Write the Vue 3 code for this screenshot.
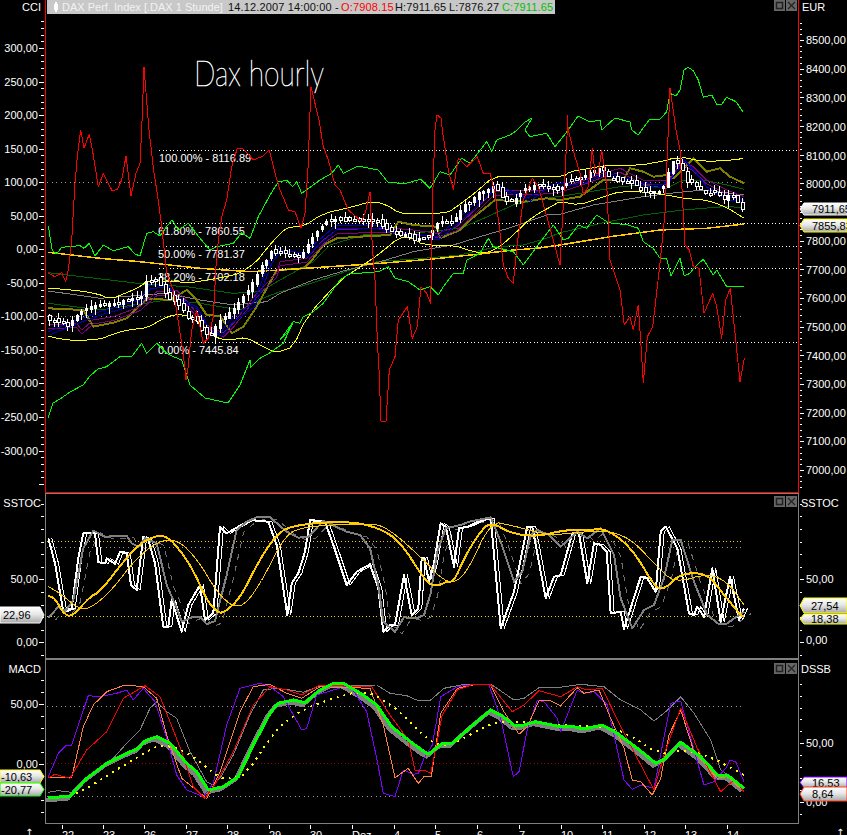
<script setup>
const Z = (ox, oy, s) =>
  s.trim().split(/\s+/).map((p) => {
    const [a, b] = p.split(',').map(Number)
    return [ox + a / 3, oy + b / 3]
  })
const A = (s) => Z(0, 0, s).map(([x, y]) => [x * 3, y * 3])
const z2 = (s) => Z(600, 0, s)
const z3 = (s) => Z(0, 130, s)
const z4 = (s) => Z(280, 130, s)
const z5 = (s) => Z(560, 130, s)
const z6 = (s) => Z(0, 485, s)
const z7 = (s) => Z(424, 485, s)
const z8 = (s) => Z(0, 655, s)
const z9 = (s) => Z(424, 655, s)
const str = (pts) => pts.map(([x, y]) => `${x.toFixed(1)},${y.toFixed(1)}`).join(' ')
const shift = (pts, dx, dy) => pts.map(([x, y]) => [x + dx, y + dy])
const smooth = (pts, n = 2) => {
  let cur = pts
  for (let k = 0; k < n; k++) {
    const out = [cur[0]]
    for (let i = 0; i < cur.length - 1; i++) {
      const [x0, y0] = cur[i]
      const [x1, y1] = cur[i + 1]
      out.push([x0 * 0.75 + x1 * 0.25, y0 * 0.75 + y1 * 0.25])
      out.push([x0 * 0.25 + x1 * 0.75, y0 * 0.25 + y1 * 0.75])
    }
    out.push(cur[cur.length - 1])
    cur = out
  }
  return cur
}

// ---- main panel series
const red = [
  ...z3('145,430 165,440 185,428 197,455 205,420 215,330 225,160 232,80 242,0 252,55 268,12 280,75 295,170 310,130 322,155 337,183 352,178 365,150 378,78 393,197 408,130 420,100 425,0'),
  ...A('144,67 149,130'),
  ...z3('462,130 472,190 485,290 500,430 520,480 545,640 555,715'),
  ...A('186,380 188,368'),
  ...z3('575,600 590,540 610,640 625,625 640,560 650,370 665,260 680,210 695,110 712,55 730,57 760,90 790,78 808,60 825,130'),
  ...z4('0,180 15,215 25,240 45,245 63,295 75,250 85,100 88,0'),
  ...A('311,87 319,120'),
  ...z4('130,50 145,90 165,165 180,180 205,240 245,275 258,240 270,185 277,350 285,450 292,630 297,720'),
  ...A('381,421 386,421'),
  ...z4('328,720 345,680 355,570 382,530 397,625 412,590 423,470 440,490 452,520 458,200 465,0'),
  ...A('437,115 441,118'),
  ...z4('487,0 505,120 520,178 535,85 560,110 592,80 610,130 630,130 645,190 660,310 670,405 685,445 700,460 712,340 730,210 757,145 775,170 795,240 840,405 855,130 862,0'),
  ...A('567,115'),
  ...z5('25,0 45,80 60,130 70,195 85,170 97,55 105,130 115,130 125,60 140,160 150,390 180,480 193,585 210,560 220,600 235,525 245,680 250,758 262,620 278,590 300,400 315,250 325,0'),
  ...A('670,88'),
  ...z5('348,0 360,60 370,250 375,345 388,360 400,410 417,415 432,550 458,490 470,530 485,625 497,510 511,475 525,610 540,755 553,685')
]
const greenHi = [
  ...z3('145,288 157,362 170,372 185,352 240,347 252,355 268,340 285,378 310,345 340,362 385,350 405,372 420,378 440,310 460,305 480,318 500,290 516,270 535,300 565,280 600,325 630,360 650,350 700,340 725,308 750,325 775,260 810,195 835,155'),
  ...z4('0,155 20,150 38,170 50,155 65,190 120,150 155,130 175,105 190,130 235,108 295,120 325,158 378,160 422,148 450,175 480,125 510,135 545,85 570,100 585,80 620,35 635,65 650,30 690,15 712,0'),
  ...A('525,122 532,118'),
  ...z4('735,0 750,20 800,10 825,50 865,0'),
  ...A('578,116 590,122 600,120'),
  ...z5('125,0'),
  ...A('615,118 630,122'),
  ...z5('215,0 235,15 245,0'),
  ...A('650,119'),
  ...z2('180,358 200,335 210,280 228,288 240,270 252,210 265,202 280,212 295,240 310,292 335,285 350,313 365,313 380,292 408,305 430,337')
]
const greenLo = [
  ...A('48,418 53,403 60,399 70,392 83,385 90,376 98,369'),
  ...z3('320,710 360,680 395,680 425,640 440,670 470,640 500,670 520,680 545,690 555,720'),
  ...A('190,385 205,398 228,403 240,385 250,360'),
  ...z3('750,715 780,685 810,668 850,640 880,575'),
  ...z4('0,630 20,610 40,575 60,580 70,560 100,545 130,520 180,450 210,430 235,430 295,425 325,410 345,445 385,455 420,480 450,470 475,495 490,470 520,430 550,430 560,390 600,370 625,325 640,350 700,365 730,405 770,350 820,285 850,330'),
  ...z5('0,305 10,330 25,325 55,285 80,295 110,255 145,278 205,285 235,295 250,335 280,355 300,385 320,385 333,438 360,385 373,438 390,430 405,410 430,388 460,435 470,420 500,470 553,470')
]
const yellowHi = smooth([
  ...z3('145,475 200,478 290,490 330,508 380,488 420,470 445,450 520,455 575,458 620,450 680,440 720,430 770,395 800,355 850,300'),
  ...z4('35,290 70,290 130,250 200,235 280,213 320,225 360,250 400,250 500,250 530,230 590,185 640,140 700,140 760,140 850,140'),
  ...z5('30,125 90,115 130,107 200,108 280,100 360,80 430,95 520,90 550,85')
], 1)
const yellowLo = smooth([
  ...z3('145,618 170,625 225,632 300,628 340,612 390,598 440,595 490,565 530,552 570,560 610,590 650,625 690,630 740,622 780,645 820,665'),
  ...z4('0,665 40,650 80,560 180,450 250,405 300,370 360,320 400,325 430,345 520,345 580,365 620,370 660,350 705,310 750,265 830,220'),
  ...z5('0,215 60,225 130,200 180,185 250,185 320,195 370,205 440,210 500,232 553,265')
], 1)
const gold = [
  ...z3('145,367 300,385 420,395 600,415 750,425'),
  ...z4('0,420 150,410 300,400 450,388 600,372 700,360 770,355'),
  ...z5('0,345 150,320 300,300 440,295 553,282')
]
const green1 = [
  ...z3('145,428 430,462 560,470 700,490 780,485'),
  ...z4('0,450 100,395 150,345 250,315 400,310 540,295 600,270 700,225 800,205'),
  ...z5('60,190 180,170 250,165 320,175 370,150 430,150 500,165 553,178')
]
const green2 = [
  ...z3('145,520 300,540 500,510 600,520 720,540 800,500'),
  ...z4('0,485 60,470 140,445 210,420 290,395 430,385 540,375 650,350 730,345 800,325'),
  ...z5('0,308 60,295 130,278 250,255 370,240 490,230 553,232')
]
const gray = [
  ...z3('145,483 300,505 500,490 600,510 700,525 800,515'),
  ...z4('0,490 100,450 200,420 300,395 400,365 520,345 600,320 700,290 800,255'),
  ...z5('0,253 100,225 250,200 330,190 430,180 553,195')
]
const olive = [
  ...z3('145,535 250,540 280,590 340,578 380,565 440,505 510,510 560,480 590,510 620,555 660,558 695,610 730,590 770,530 830,420'),
  ...z4('0,420 70,415 100,385 130,345 170,325 240,320 330,315 355,275 400,285 470,290 480,325 540,300 570,270 620,230 645,210 730,215 800,205'),
  ...z5('0,210 60,200 130,150 190,150 210,115 250,125 280,140 320,135 340,145 400,85 440,125 480,115 510,140 553,160')
]
const purple = [
  ...z3('145,585 230,580 245,600 280,570 340,560 420,530 470,485 530,480 570,525 620,585 670,610 700,580 770,490 830,430'),
  ...z4('0,395 80,385 130,330 170,300 280,295 340,295 400,300 470,310 530,290 590,235 640,185 700,180 790,180'),
  ...z5('0,175 60,155 130,130 180,115 250,150 320,150 360,90 400,110 440,150 500,180 553,200')
]
const navy = [
  ...z3('145,605 230,570 300,545 420,510 445,468 500,460 530,500 590,530 625,595 660,610 690,570 760,520 810,390 840,350'),
  ...z4('0,360 80,370 100,345 170,285 280,285 340,300 400,315 470,320 530,270 590,215 645,165 700,185 745,205 790,170'),
  ...z5('0,160 70,150 125,125 180,140 250,160 310,165 340,120 370,85 410,130 440,170 500,200 553,210')
]

// candles follow the price path
const price = [
  ...z3('150,570 185,578 200,590 240,548 268,530 310,525 340,522 380,510 425,500 435,455 448,455 470,450 490,485 505,505 530,520 545,530 560,565 585,565 610,610 628,620 655,575 670,565 697,540 712,525 725,505 740,490 752,465 765,450 780,410 795,400 810,365 830,370'),
  ...z4('10,370 38,378 64,378 92,330 106,310 120,298 135,280 148,270 162,272 175,268 190,270 205,272 218,270 245,272 270,270 290,275 310,295 335,305 355,318 380,315 400,330 425,325 450,322 465,285 485,275 505,278 520,275 535,250 550,228 578,212 590,190 605,185 620,185 632,170 645,170 660,195 675,215 700,215 730,180 745,175 758,168 775,165 800,170'),
  ...z5('0,180 30,150 60,145 95,125 125,115 145,140 165,150 195,155 220,160 250,185 275,188 305,185 320,150 330,100 345,95 360,100 375,155 400,160 430,185 445,195 470,180 485,210 510,195 525,200 540,230 553,245')
]
const priceAt = (x) => {
  for (let i = 1; i < price.length; i++) {
    if (x <= price[i][0]) {
      const [x0, y0] = price[i - 1]
      const [x1, y1] = price[i]
      return y0 + ((y1 - y0) * (x - x0)) / Math.max(x1 - x0, 0.01)
    }
  }
  return price[price.length - 1][1]
}
const rnd = (n) => {
  const v = Math.sin(n * 12.9898) * 43758.5453
  return v - Math.floor(v)
}
const candles = []
for (let i = 0, x = 49; x < 745; i++, x += 4.62) {
  const c = priceAt(x)
  const o = priceAt(x - 4.62) + (rnd(i) - 0.5) * 5
  const top = Math.round(Math.min(o, c) - 1)
  const h = Math.max(Math.round(Math.abs(o - c)) + 1, 2)
  const w1 = Math.round(rnd(i + 300) * 6)
  const w2 = Math.round(rnd(i + 700) * 7)
  candles.push({
    x: Math.round(x),
    top,
    h,
    wt: top - w1,
    wb: top + h + w2,
    up: c <= o && h > 2
  })
}

const mainLines = [
  { c: 'l-g1', p: green1 },
  { c: 'l-g1', p: green2 },
  { c: 'l-gray', p: gray },
  { c: 'l-olive', p: olive },
  { c: 'l-yellow', p: yellowHi },
  { c: 'l-yellow', p: yellowLo },
  { c: 'l-gold', p: gold },
  { c: 'l-purple', p: purple },
  { c: 'l-purple', p: shift(purple, 0, 4) },
  { c: 'l-navy', p: navy },
  { c: 'l-navy', p: shift(navy, 2, 3) }
].map((l) => ({ c: l.c, p: str(l.p) }))
const topLines = [
  { c: 'l-green', p: greenHi },
  { c: 'l-green', p: greenLo },
  { c: 'l-red', p: red }
].map((l) => ({ c: l.c, p: str(l.p) }))

// ---- SSTOC
const wThick = [
  ...z6('145,160 165,235 190,380 215,370 235,220 250,145 285,145 295,232 315,235 320,220 345,237 360,200 380,205 393,300 410,315 430,155 445,165 465,235 490,425 505,425 515,345 545,440 565,360 600,300 615,405 640,385 660,125 680,145 715,125 750,105 805,110 830,180 862,390 875,295 895,265 915,200 930,105 975,110 1000,180 1040,300 1070,260 1110,238 1135,310 1150,440 1170,420 1185,420 1212,270 1235,390 1255,370 1265,220'),
  ...z7('0,218 15,290 30,235 50,115 65,125 90,245 105,130 130,125 175,105 200,100 230,430 270,320 310,125 325,125 365,340 390,275 410,270 445,145 465,145 490,295 510,175 530,180 548,200 560,385 590,380 600,432 650,275 670,280 695,320 710,140 725,125 760,190 795,385 810,390 820,365 840,395 865,250 890,410 918,275 945,405 960,370')
]
const gThick = [
  ...z6('145,400 175,365 195,380 220,345 250,190 280,137 315,155 380,152 395,175 415,185 435,160 470,175 500,300 530,370 545,410 580,395 600,395 620,418 645,408 680,270 710,135 740,110 770,97 810,97 860,140 895,158 925,155 970,108 1040,140 1080,150 1110,190 1135,300 1150,410 1185,440 1212,397 1250,400'),
  ...z7('0,390 20,325 40,200 65,130 110,120 135,110 200,97 230,170 270,290 295,260 320,150 340,135 375,150 410,185 460,140 490,160 530,130 570,210 590,340 625,430 660,375 690,360 720,280 745,165 770,165 810,290 850,390 885,418 905,418 960,380')
]
const yThick = smooth([
  ...z6('145,333 165,340 190,385 215,397 270,335 300,320 370,230 420,175 470,152 490,152 520,170 575,245 620,345 650,380 670,385 720,340 770,240 820,160 870,120 1050,108 1140,130 1200,170'),
  ...z7('0,280 20,300 50,300 65,290 90,290 120,220 165,145 200,110 260,145 340,155 420,135 500,135 535,130 590,160 640,215 695,310 725,310 770,265 850,265 900,330 950,390 960,395')
], 2)
const yThin = smooth([
  ...z6('145,305 180,325 240,375 280,365 340,310 400,230 470,170 530,162 590,220 650,320 700,368 740,355 790,280 850,160 900,125 1100,115 1160,125'),
  ...z7('0,225 50,280 90,295 130,260 200,110 260,120 370,150 440,145 540,135 620,160 690,235 750,295 850,265 910,290 960,360')
], 2)
const stocLines = [
  { c: 'l-dash', p: shift(gThick, 7, 2) },
  { c: 'l-wthin', p: shift(wThick, 3.5, 0) },
  { c: 'l-wthick', p: wThick },
  { c: 'l-gthick', p: gThick },
  { c: 'l-ythin', p: yThin },
  { c: 'l-ythick', p: yThick }
].map((l) => ({ c: l.c, p: str(l.p) }))

// ---- MACD / DSSB
const mGray = [
  ...z8('145,412 175,407 215,412 260,370 340,310 380,265 420,225 450,160 470,140 500,170 530,190 570,290 620,380 640,390 660,370 700,300 750,180 790,105 830,100 870,105 910,112 960,92 1130,90 1170,115 1220,122 1250,135'),
  ...z9('0,137 20,135 60,100 110,90 200,87 270,135 300,130 345,98 400,98 470,88 540,95 590,135 650,165 690,198 725,170 770,125 810,175 860,255 890,345 920,365 960,400')
]
const mPurple = [
  ...z8('145,365 175,295 200,270 215,270 265,122 300,125 350,115 380,105 400,135 430,100 465,140 500,250 530,360 560,405 610,425 640,385 680,210 720,100 780,85 810,95 850,125 905,225 920,220 950,120 1050,90 1100,170 1130,310 1150,415 1185,425 1210,345 1240,358 1255,355'),
  ...z9('0,310 25,270 50,125 100,95 160,87 195,90 230,190 268,365 285,350 310,225 340,135 360,140 400,190 410,230 460,105 480,115 510,110 550,150 600,375 625,403 650,390 690,400 740,145 770,138 800,250 840,390 870,380 905,340 918,315 935,320 960,380')
]
const mOrange = [
  ...z8('145,368 215,368 250,215 280,150 320,110 375,90 430,95 470,130 500,240 545,370 620,430 660,350 720,170 760,95 810,88 860,115 905,130 960,95 1110,100 1150,210 1185,368 1225,340 1255,385'),
  ...z9('0,365 22,365 50,175 100,100 160,87 200,90 240,170 285,238 310,215 345,137 380,137 410,152 460,98 480,115 525,105 560,190 600,280 625,375 650,380 685,420 710,370 735,240 770,165 810,290 880,370 910,365 960,410')
]
const mRed = [
  ...z8('145,368 165,358 210,370 260,285 320,230 370,130 435,92 480,125 510,200 545,290 580,395 615,430 650,380 700,290 760,150 810,95 860,105 905,120 960,90 1115,95 1170,180 1225,255 1245,345'),
  ...z9('0,345 20,355 55,180 100,105 150,87 200,90 265,170 300,150 345,107 410,125 460,95 490,105 535,100 590,215 640,310 690,405 720,300 770,160 820,280 890,410 930,375 960,410')
]
const mGreen = [
  ...z8('145,428 210,424 260,370 320,325 380,295 415,280 435,258 470,245 510,265 560,325 590,350 625,405 670,395 715,365 760,270 810,175 835,145 880,135 915,143 960,105 1000,85 1030,85 1090,120 1130,150 1175,215 1225,255'),
  ...z9('0,290 15,297 55,265 85,265 140,215 200,165 230,180 270,210 300,210 335,200 410,215 440,213 480,222 535,210 580,235 640,280 695,325 725,310 770,262 830,305 880,360 910,360 960,400')
]
const mDots = smooth([
  ...z8('145,428 230,420 340,350 440,290 480,270 540,280 600,320 660,370 700,370 740,355 820,235 880,180 960,142 1090,105 1150,135 1200,170'),
  ...z9('0,245 50,275 100,260 210,200 270,200 340,205 430,212 530,212 610,235 710,300 770,285 850,300 960,360')
], 1)
const macdLines = [
  { c: 'l-mband', p: shift(mGreen, -2.5, 2.5) },
  { c: 'l-mgray', p: mGray },
  { c: 'l-mpurple', p: mPurple },
  { c: 'l-morange', p: mOrange },
  { c: 'l-red', p: mRed },
  { c: 'l-mdots', p: mDots },
  { c: 'l-mgreen', p: mGreen }
].map((l) => ({ c: l.c, p: str(l.p) }))

// ---- axes
const axis = (from, to, step, skip, len, x, dir) => {
  const out = []
  for (let y = from, i = 0; y <= to; y += step, i++) {
    const major = skip(i)
    out.push({ x1: x, x2: x + dir * (major ? len : len - 2), y: Math.round(y) + 0.5 })
  }
  return out
}
const ticks = [
  ...axis(48 - 6.71 * 4, 485, 6.71, (i) => i % 5 === 4, 5, 44, -1),
  ...axis(40 - 5.733 * 3, 488, 5.733, (i) => i % 5 === 3, 4, 800, 1),
  ...axis(642.3 - 12.6 * 11, 656, 12.6, (i) => i === 6 || i === 11, 5, 44, -1),
  ...axis(642.3 - 12.6 * 11, 656, 12.6, (i) => i === 6 || i === 11, 4, 800, 1),
  ...axis(703.7 - 12 * 2, 812, 12, (i) => i === 2 || i === 7, 5, 44, -1),
  ...axis(743 - 11.8 * 5, 815, 11.8, (i) => i === 5 || i === 10, 4, 800, 1)
]
const leftLabels = [
  ['300,00', 48], ['250,00', 82], ['200,00', 115], ['150,00', 149], ['100,00', 182], ['50,00', 216],
  ['0,00', 249], ['-50,00', 283], ['-100,00', 316], ['-150,00', 350], ['-200,00', 383], ['-250,00', 417],
  ['-300,00', 451], ['50,00', 579], ['0,00', 642], ['50,00', 704], ['0,00', 764]
]
const rightLabels = [
  ['8500,00', 40], ['8400,00', 69], ['8300,00', 98], ['8200,00', 127], ['8100,00', 156], ['8000,00', 184],
  ['7800,00', 241], ['7700,00', 270], ['7600,00', 298], ['7500,00', 327], ['7400,00', 356], ['7300,00', 384],
  ['7200,00', 413], ['7100,00', 441], ['7000,00', 470], ['50,00', 579], ['0,00', 640], ['50,00', 743], ['0,00', 802]
]
const fibs = [
  ['100.00% - 8116.89', 159, 162, 150.5],
  ['61.80% - 7860.55', 158, 235, 223.5],
  ['50.00% - 7781.37', 158, 258, 246.5],
  ['38.20% - 7702.18', 158, 281, 268.5],
  ['0.00% - 7445.84', 158, 354, 342.5]
]
const days = [
  ['22', 62], ['23', 103], ['26', 144], ['27', 186], ['28', 227], ['29', 269], ['30', 310], ['Dez', 352],
  ['4', 394], ['5', 435], ['6', 477], ['7', 519], ['10', 561], ['11', 602], ['12', 644], ['13', 685], ['14', 727]
]
const tagR = (y, h) => `847,${y} 804,${y} 800,${y + h / 2} 804,${y + h} 847,${y + h}`
const tagL = (y, h) => `0,${y} 40,${y} 44,${y + h / 2} 40,${y + h} 0,${y + h}`
const tags = [
  { pts: tagR(203, 12), c: 't-white', t: '7911,65', x: 812, y: 213 },
  { pts: tagR(219, 13), c: 't-yellow', t: '7855,83', x: 812, y: 230 },
  { pts: tagR(598, 15), c: 't-yellow', t: '27,54', x: 811, y: 610 },
  { pts: tagR(614, 10), c: 't-yellow', t: '18,38', x: 811, y: 623 },
  { pts: tagR(777, 11), c: 't-purple', t: '16,53', x: 812, y: 787 },
  { pts: tagR(787, 14), c: 't-orange', t: '8,64', x: 812, y: 798 },
  { pts: tagL(607, 16), c: 't-white', t: '22,96', x: 3, y: 619 },
  { pts: tagL(770, 13), c: 't-yellow', t: '-10,63', x: 1, y: 781 },
  { pts: tagL(783, 13), c: 't-green', t: '-20,77', x: 1, y: 794 }
]
const buttonRows = [0, 496, 663]
</script>

<template>
  <div class="screen">
    <svg class="chart" viewBox="0 0 847 835" width="847" height="835" xmlns="http://www.w3.org/2000/svg">
      <defs>
        <linearGradient id="tagFill" x1="0" y1="0" x2="0" y2="1">
          <stop offset="0" stop-color="#ffffff" />
          <stop offset="0.45" stop-color="#e8e8e8" />
          <stop offset="1" stop-color="#a8a8a8" />
        </linearGradient>
      </defs>

      <!-- header -->
      <rect class="head" x="47" y="0" width="508" height="14" />
      <rect class="head-w" x="54" y="4" width="4" height="6" />
      <rect class="head-w" x="55" y="2" width="2" height="10" />
      <text class="txt h-light" x="62" y="11">DAX Perf. Index [.DAX 1 Stunde]</text>
      <text class="txt hdr" y="11">
        <tspan class="h-dark" x="228">14.12.2007 14:00:00 -</tspan>
        <tspan class="h-red" x="341">O:7908.15</tspan>
        <tspan class="h-dark" x="395">H:7911.65</tspan>
        <tspan class="h-dark" x="449">L:7876.27</tspan>
        <tspan class="h-green" x="502">C:7911.65</tspan>
      </text>

      <!-- window buttons -->
      <g v-for="by in buttonRows" :key="by" :transform="`translate(774 ${by})`">
        <rect class="btn" x="0" y="0" width="11" height="11" />
        <rect class="btn-i" x="2.5" y="2.5" width="6" height="6" />
        <rect class="btn" x="12" y="0" width="11" height="11" />
        <path class="btn-x" d="M14 2 L21 9 M21 2 L14 9" />
      </g>

      <!-- fib labels + dotted levels -->
      <text v-for="f in fibs" :key="f[0]" class="txt t-w" :x="f[1]" :y="f[2]">{{ f[0] }}</text>
      <line v-for="f in fibs" :key="'l' + f[0]" class="dot-w" x1="159" x2="798" :y1="f[3]" :y2="f[3]" />
      <line class="dot-g" x1="47" x2="745" y1="182.5" y2="182.5" />
      <line class="dot-g" x1="47" x2="745" y1="316.5" y2="316.5" />

      <text class="title" x="194" y="86" textLength="130" lengthAdjust="spacingAndGlyphs">Dax hourly</text>

      <polyline v-for="(l, i) in mainLines" :key="'m' + i" :class="l.c" :points="l.p" />
      <g v-for="(k, i) in candles" :key="'c' + i">
        <line class="wick" :x1="k.x + 0.5" :x2="k.x + 0.5" :y1="k.wt" :y2="k.wb" />
        <rect :class="k.up ? 'body' : 'body-d'" :x="k.x - 1" :y="k.top" width="3" :height="k.h" />
      </g>
      <polyline v-for="(l, i) in topLines" :key="'t' + i" :class="l.c" :points="l.p" />

      <!-- panel frames -->
      <line class="fr-red" x1="45.5" x2="45.5" y1="0" y2="492" />
      <line class="fr-red" x1="798.5" x2="798.5" y1="0" y2="492" />
      <line class="fr-red" x1="45" x2="799" y1="492.5" y2="492.5" />
      <line class="fr-gray" x1="45" x2="799" y1="493.5" y2="493.5" />
      <line class="fr-gray" x1="45.5" x2="45.5" y1="493" y2="824" />
      <line class="fr-gray" x1="798.5" x2="798.5" y1="493" y2="824" />
      <line class="fr-gray2" x1="45" x2="799" y1="659" y2="659" />
      <line class="fr-gray" x1="45" x2="799" y1="823.5" y2="823.5" />

      <!-- SSTOC -->
      <line class="dot-y" x1="47" x2="742" y1="541.5" y2="541.5" />
      <line class="dot-g" x1="47" x2="742" y1="547.5" y2="547.5" />
      <line class="dot-y" x1="47" x2="742" y1="616.5" y2="616.5" />
      <polyline v-for="(l, i) in stocLines" :key="'s' + i" :class="l.c" :points="l.p" />

      <!-- MACD -->
      <line class="dot-g" x1="47" x2="741" y1="706.5" y2="706.5" />
      <line class="dot-r" x1="47" x2="741" y1="763.5" y2="763.5" />
      <line class="dot-g" x1="47" x2="741" y1="796.5" y2="796.5" />
      <polyline v-for="(l, i) in macdLines" :key="'d' + i" :class="l.c" :points="l.p" />

      <!-- ticks and labels -->
      <line v-for="(t, i) in ticks" :key="'k' + i" class="tick" :x1="t.x1" :x2="t.x2" :y1="t.y" :y2="t.y" />
      <text v-for="(t, i) in leftLabels" :key="'ll' + i" class="txt t-w" x="38" :y="t[1] + 4" text-anchor="end">{{ t[0] }}</text>
      <text v-for="(t, i) in rightLabels" :key="'rl' + i" class="txt t-w" x="806" :y="t[1] + 4">{{ t[0] }}</text>
      <text class="txt t-w" x="41" y="11" text-anchor="end">CCI</text>
      <text class="txt t-w" x="802" y="11">EUR</text>
      <text class="txt t-w" x="41" y="507" text-anchor="end">SSTOC</text>
      <text class="txt t-w" x="801" y="507">SSTOC</text>
      <text class="txt t-w" x="41" y="673" text-anchor="end">MACD</text>
      <text class="txt t-w" x="801" y="673">DSSB</text>

      <!-- value tags -->
      <g v-for="t in tags" :key="t.t">
        <polygon :class="t.c" fill="url(#tagFill)" :points="t.pts" />
        <text class="txt t-k" :x="t.x" :y="t.y">{{ t.t }}</text>
      </g>

      <!-- time axis -->
      <g v-for="d in days" :key="d[0]">
        <line class="tick" :x1="d[1] + 0.5" :x2="d[1] + 0.5" y1="825" y2="829" />
        <text class="txt t-w" :x="d[1] + 0" y="839">{{ d[0] }}</text>
      </g>
      <text class="arrow" x="25" y="836">↑</text>
      <text class="arrow" x="836" y="836">↑</text>
    </svg>
  </div>
</template>

<style scoped>
.screen {
  width: 847px;
  height: 835px;
  background: #000;
  overflow: hidden;
}
.chart {
  display: block;
}
polyline {
  fill: none;
  shape-rendering: crispEdges;
  stroke-linejoin: round;
}
line {
  shape-rendering: crispEdges;
}
.txt {
  font-family: "Liberation Sans", Arial, sans-serif;
  font-size: 11px;
}
.hdr { letter-spacing: 0.15px; }
.t-w { fill: #fff; }
.t-k { fill: #000; }
.title {
  font-family: Lato, Roboto, "Liberation Sans", sans-serif;
  font-weight: 100;
  font-size: 36px;
  fill: #fff;
  stroke: #fff;
  stroke-width: 0.6px;
}
.arrow {
  font-family: "DejaVu Sans", sans-serif;
  font-size: 10px;
  fill: #fff;
}
.head { fill: #c8c8c8; }
.head-w { fill: #fff; }
.h-light { fill: #f2f2f2; }
.h-dark { fill: #111; }
.h-red { fill: #f00; }
.h-green { fill: #00c000; }
.btn { fill: #666; }
.btn-i { fill: none; stroke: #222; stroke-width: 1.5; }
.btn-x { stroke: #222; stroke-width: 1.2; fill: none; }
.dot-w { stroke: #fff; stroke-dasharray: 1 2.5; }
.dot-g { stroke: #9a9a9a; stroke-dasharray: 1 3.5; }
.dot-y { stroke: #ffcc00; stroke-dasharray: 1 2.5; }
.dot-r { stroke: #a00000; stroke-dasharray: 1 2.5; }
.wick { stroke: #fff; }
.body { fill: #fff; }
.body-d { fill: #000; stroke: #fff; stroke-width: 1; shape-rendering: crispEdges; }
.tick { stroke: #fff; }
.fr-red { stroke: #f00; stroke-width: 1; }
.fr-gray { stroke: #808080; stroke-width: 1; }
.fr-gray2 { stroke: #808080; stroke-width: 2; }
.l-red { stroke: #f00; stroke-width: 1; }
.l-green { stroke: #00ff00; stroke-width: 1; }
.l-g1 { stroke: #006400; stroke-width: 1; }
.l-gray { stroke: #808080; stroke-width: 1; }
.l-yellow { stroke: #ffff00; stroke-width: 1; }
.l-gold { stroke: #ffcc00; stroke-width: 1.5; }
.l-olive { stroke: #808000; stroke-width: 2; }
.l-purple { stroke: #800080; stroke-width: 1; }
.l-navy { stroke: #0000c0; stroke-width: 1; }
.l-wthick { stroke: #fff; stroke-width: 2; }
.l-wthin { stroke: #fff; stroke-width: 1; }
.l-gthick { stroke: #808080; stroke-width: 2; }
.l-dash { stroke: #707070; stroke-width: 1; stroke-dasharray: 6 6; }
.l-ythick { stroke: #ffcc00; stroke-width: 2; }
.l-ythin { stroke: #ffcc00; stroke-width: 1; }
.l-mband { stroke: #808080; stroke-width: 4; }
.l-mgray { stroke: #808080; stroke-width: 1; }
.l-mpurple { stroke: #8000ff; stroke-width: 1; }
.l-morange { stroke: #ff8040; stroke-width: 1; }
.l-mgreen { stroke: #00ff00; stroke-width: 3; }
.l-mdots { stroke: #ffff00; stroke-width: 2; stroke-dasharray: 2 5; }
.t-white { stroke: #fff; stroke-width: 1; }
.t-yellow { stroke: #ffff00; stroke-width: 1; }
.t-green { stroke: #00ff00; stroke-width: 1; }
.t-purple { stroke: #8000ff; stroke-width: 1; }
.t-orange { stroke: #ff4020; stroke-width: 1; }
</style>
